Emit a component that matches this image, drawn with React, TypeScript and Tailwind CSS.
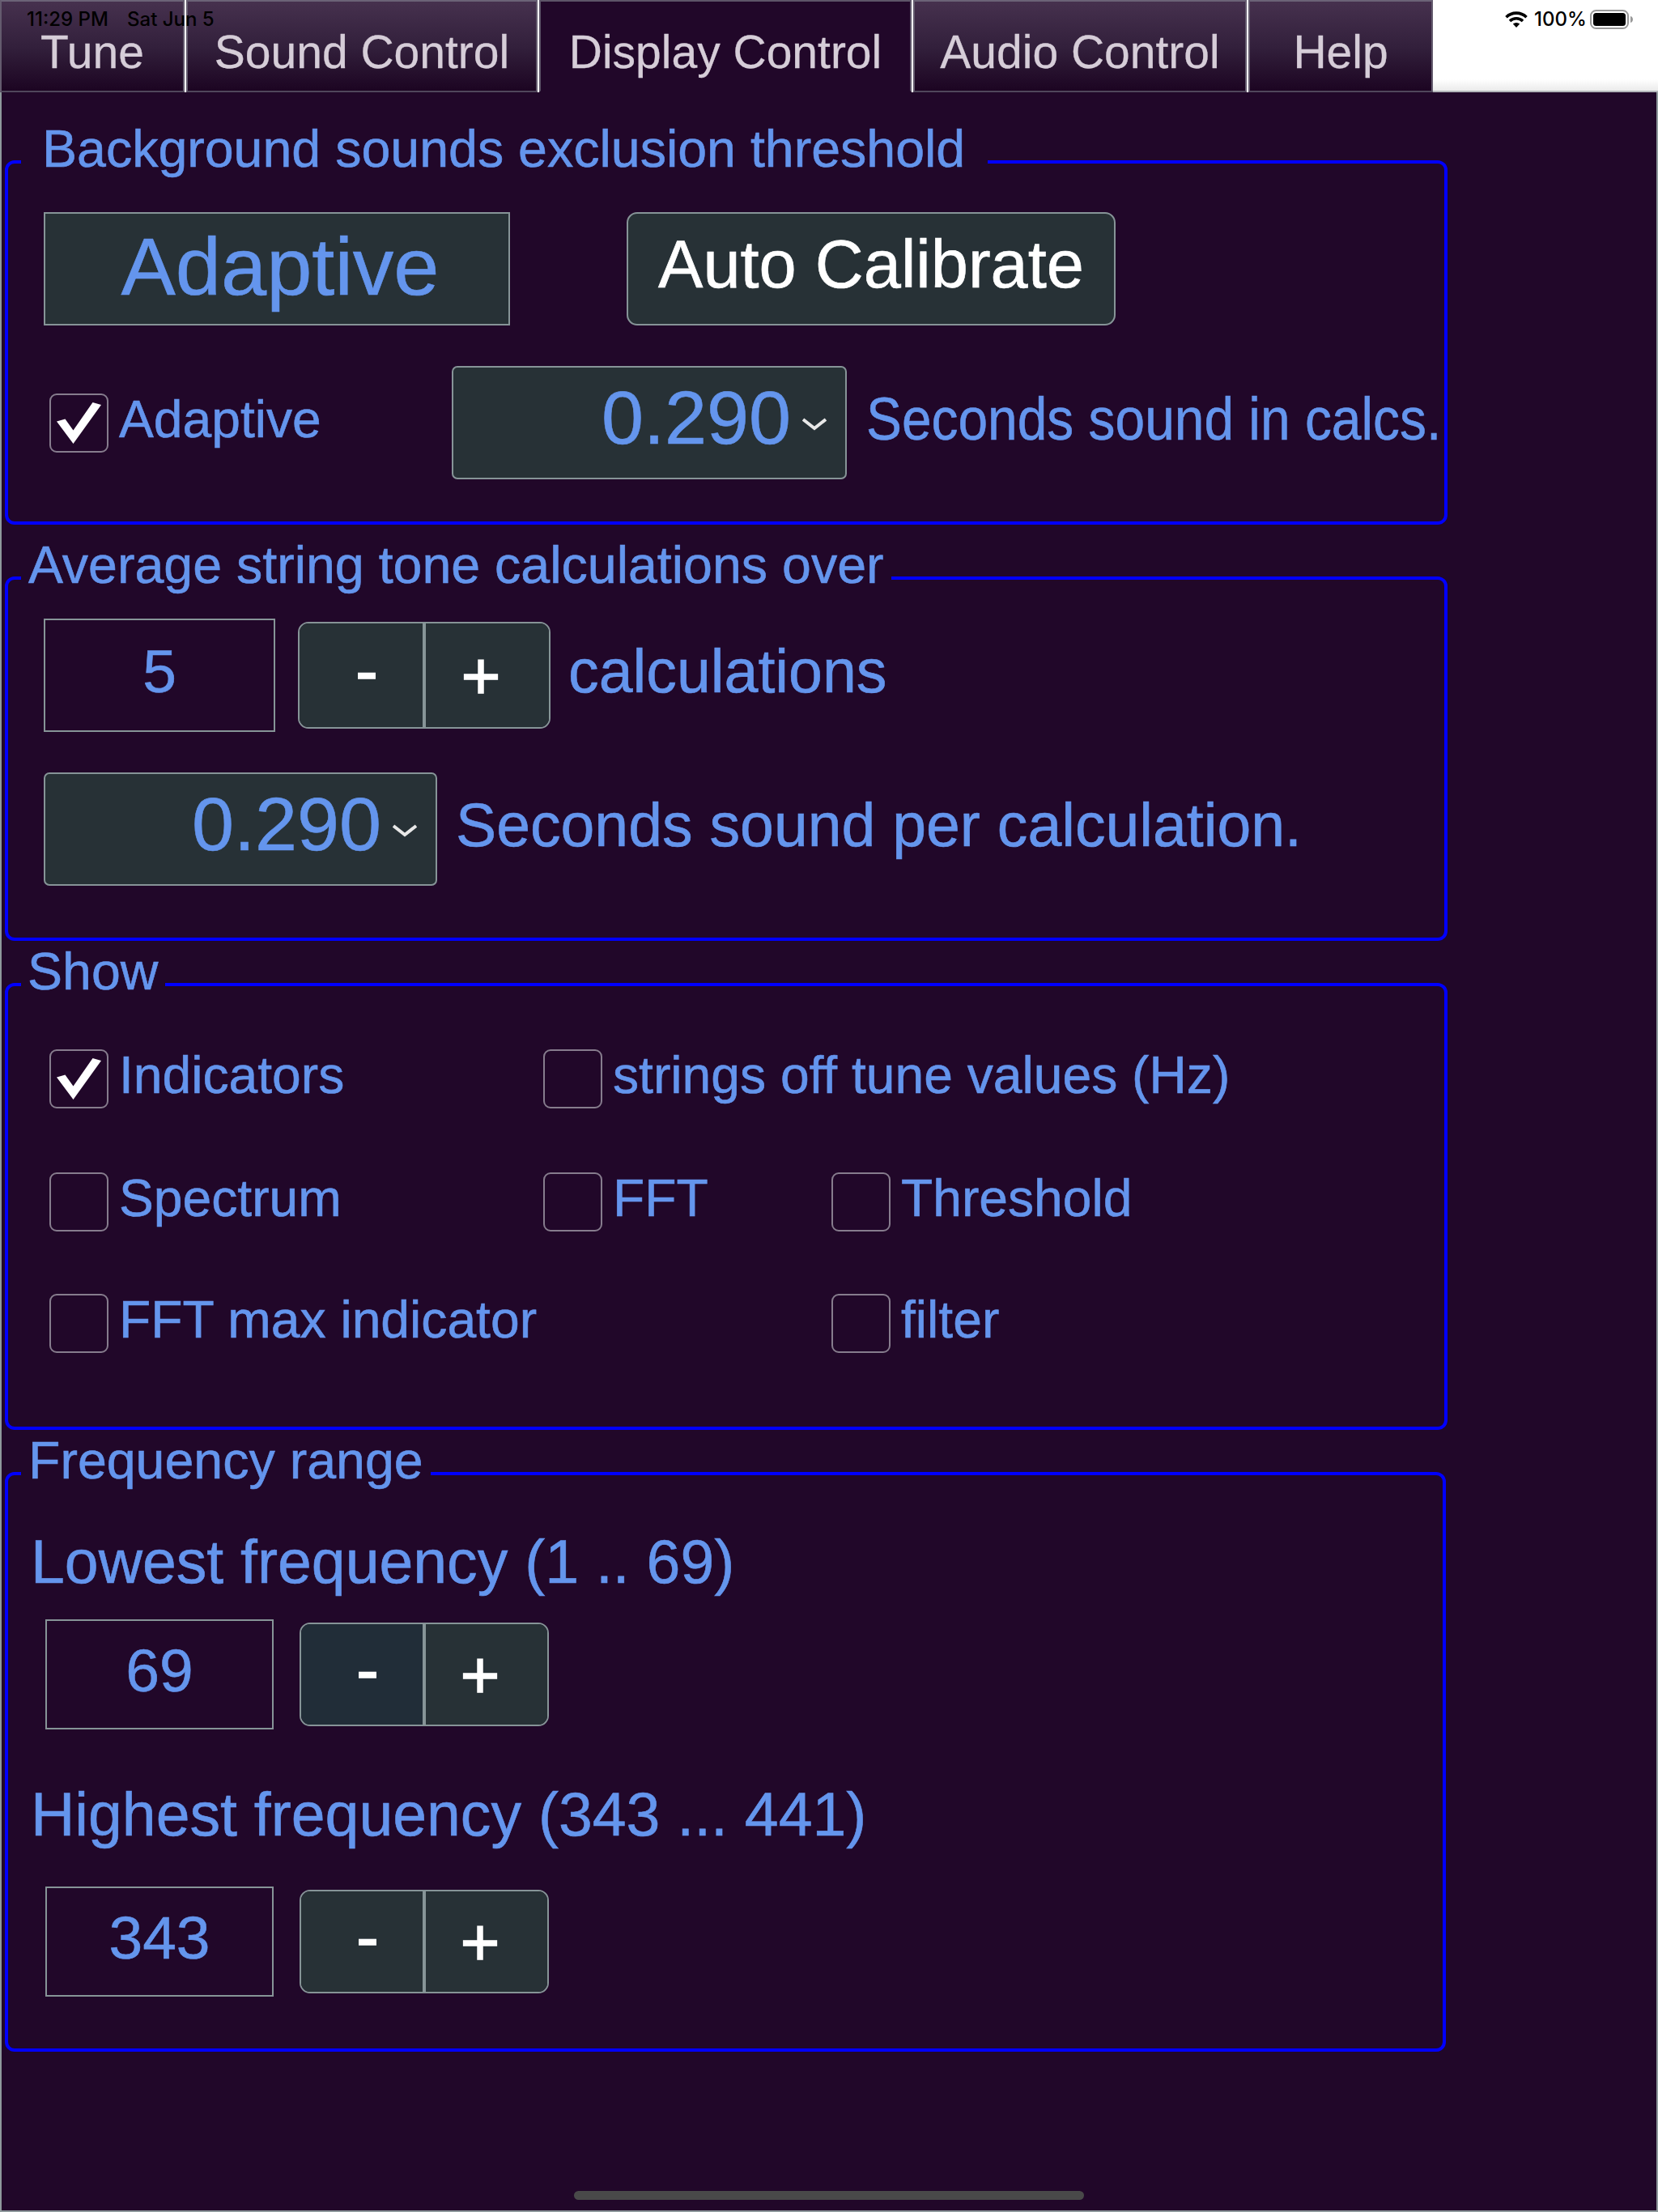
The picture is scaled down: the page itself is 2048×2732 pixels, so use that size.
import React from "react";

type Kids = { children?: React.ReactNode };

function Tab({ label, width, active }: { label: string; width: string; active?: boolean }) {
  return (
    <div
      className={`${width} h-[114px] shrink-0 border-2 pt-[36px] text-center text-[57px] leading-[52px] whitespace-nowrap text-[#d6cdd8] ${
        active
          ? "border-x-[#5d5468] border-t-[#5d5468] border-b-[#210729] bg-[#210729]"
          : "border-x-[#645b6e] border-t-[#6b6377] border-b-[#50465b] bg-linear-to-b from-[#46314e] via-[#33203c] to-[#1c0522]"
      }`}
    >
      {label}
    </div>
  );
}

function Group({ legend, legendClass, className, children }: Kids & { legend: string; legendClass: string; className: string }) {
  return (
    <section className={`${className} ml-[6px] flex flex-col rounded-[12px] border-4 border-[#0000ff]`}>
      <h2 className={`${legendClass} -mt-[52px] ml-[16px] h-[68px] shrink-0 self-start bg-[#210729] text-[64.5px] leading-[68px] whitespace-nowrap`}>{legend}</h2>
      {children}
    </section>
  );
}

function Check({ label, checked, className = "" }: { label: string; checked?: boolean; className?: string }) {
  return (
    <label className={`${className} flex h-[73px] items-center gap-[13px]`}>
      <span className="h-[73px] w-[73px] shrink-0 rounded-[9px] border-2 border-[#867c8d]">
        {checked && (
          <svg viewBox="2 2 69 69" className="h-full w-full">
            <path d="M9 34.5 19.5 31.5 29.5 45.5 53.5 11 64 14 29.5 62Z" fill="#fff" />
          </svg>
        )}
      </span>
      <span className="pb-[9px] text-[64.2px] leading-[64px] whitespace-nowrap">{label}</span>
    </label>
  );
}

function Select({ value, className }: { value: string; className: string }) {
  return (
    <div className={`${className} flex h-[140px] shrink-0 items-center justify-end rounded-[7px] border-2 border-[#869497] bg-[#273136] pr-[23px]`}>
      <span className="pb-[12px] text-[93.5px] leading-[94px]">{value}</span>
      <svg viewBox="0 0 30 16" className="mt-[3px] ml-[14px] h-[16px] w-[30px]">
        <path d="M1 2 15 13 29 2" fill="none" stroke="#e8e8e8" strokeWidth="4" />
      </svg>
    </div>
  );
}

function Stepper({ size, pressed }: { size: string; pressed?: boolean }) {
  return (
    <div className={`${size} grid shrink-0 grid-cols-[1fr_4px_1fr] overflow-hidden rounded-[13px] border-2 border-[#869497] text-[84px] leading-[84px] text-white [-webkit-text-stroke:1.4px]`}>
      <button className={`flex items-center justify-center pb-[12px] pl-[14px] ${pressed ? "bg-[#212d38]" : "bg-[#273136]"}`}>-</button>
      <span className="bg-[#869497]" />
      <button className="flex items-center justify-center bg-[#273136] pr-[16px]">+</button>
    </div>
  );
}

function NumberBox({ value, size }: { value: string; size: string }) {
  return (
    <div className={`${size} flex shrink-0 items-center justify-center border-2 border-[#869497] pb-[10px] text-[75px] leading-[75px]`}>
      {value}
    </div>
  );
}

function StatusBar() {
  return (
    <div className="absolute inset-x-0 top-0 flex h-[48px] items-center pr-[30px] pl-[33px] font-['Inter',sans-serif] text-[24px] leading-[24px] font-medium text-black">
      <span className="w-[124px] whitespace-nowrap">11:29 PM</span>
      <span className="grow whitespace-nowrap">Sat Jun 5</span>
      <svg viewBox="0 0 28 20" className="h-[20px] w-[28px]">
        <g fill="none" stroke="#000" strokeWidth="3.6">
          <path d="M1.5 7.2a18 18 0 0 1 25 0" />
          <path d="M6 12a11.6 11.6 0 0 1 16 0" />
        </g>
        <path d="M14 20 9.8 15.6a6.2 6.2 0 0 1 8.4 0Z" fill="#000" />
      </svg>
      <span className="ml-[8px] w-[69px] whitespace-nowrap">100%</span>
      <svg viewBox="0 0 54 24" className="h-[24px] w-[54px]">
        <rect x="1" y="1" width="46" height="22" rx="6.5" fill="none" stroke="#999" strokeWidth="2" />
        <rect x="4" y="4" width="40" height="16" rx="3.5" fill="#000" />
        <path d="M50 8c4 1 4 7 0 8Z" fill="#999" />
      </svg>
    </div>
  );
}

export default function App() {
  return (
    <div className="relative flex h-[2732px] w-[2048px] flex-col overflow-hidden bg-[#210729] font-['Liberation_Sans',Arial,sans-serif] text-[#6495ed]">
      <nav className="flex h-[114px] shrink-0 gap-[2px] bg-white [-webkit-text-stroke:0.3px]">
        <Tab label="Tune" width="w-[228px]" />
        <Tab label="Sound Control" width="w-[434px]" />
        <Tab label="Display Control" width="w-[460px]" active />
        <Tab label="Audio Control" width="w-[412px]" />
        <Tab label="Help" width="w-[228px]" />
        <div className="-ml-[2px] flex grow flex-col justify-end">
          <div className="h-[16px] border-b-2 border-[#b3b5ba] bg-linear-to-b from-white to-[#ebebeb]" />
        </div>
      </nav>

      <main className="flex grow flex-col border-x-2 border-b-2 border-[#8f999c] [-webkit-text-stroke:0.6px]">
        <div className="-ml-[2px] flex flex-col">
          <Group legend="Background sounds exclusion threshold" className="mt-[84px] h-[450px] w-[1782px]" legendClass="w-[1194px] pl-[26px]">
            <div className="mt-[44px] ml-[44px] flex">
              <div className="flex h-[140px] w-[576px] items-center justify-center border-2 border-[#869497] bg-[#273136] pb-[6px] pl-[8px] text-[101px] leading-[100px]">
                Adaptive
              </div>
              <button className="ml-[144px] flex h-[140px] w-[604px] items-center justify-center rounded-[13px] border-2 border-[#869497] bg-[#273136] pb-[10px] text-[83px] leading-[84px] text-white">
                Auto Calibrate
              </button>
            </div>
            <div className="mt-[50px] ml-[51px] flex h-[140px] items-center">
              <Check label="Adaptive" checked className="w-[497px]" />
              <Select value="0.290" className="w-[488px]" />
              <span className="ml-[24px] w-[690px] origin-left scale-x-[.89] pb-[9px] text-[74px] leading-[74px] whitespace-nowrap">Seconds sound in calcs.</span>
            </div>
          </Group>

          <Group legend="Average string tone calculations over" className="mt-[64px] h-[450px] w-[1782px]" legendClass="w-[1075px] pl-[9px]">
            <div className="mt-[32px] ml-[44px] flex h-[140px] items-center">
              <NumberBox value="5" size="h-[140px] w-[286px]" />
              <div className="ml-[28px]">
                <Stepper size="h-[132px] w-[312px]" />
              </div>
              <span className="ml-[22px] pb-[10px] text-[75.3px] leading-[76px]">calculations</span>
            </div>
            <div className="mt-[50px] ml-[44px] flex h-[140px] items-center">
              <Select value="0.290" className="w-[486px]" />
              <span className="ml-[23px] pb-[10px] text-[75.2px] leading-[76px] whitespace-nowrap">Seconds sound per calculation.</span>
            </div>
          </Group>

          <Group legend="Show" className="mt-[52px] h-[552px] w-[1782px]" legendClass="w-[178px] pl-[8px]">
            <div className="mt-[62px] ml-[51px] flex">
              <Check label="Indicators" checked className="w-[610px]" />
              <Check label="strings off tune values (Hz)" />
            </div>
            <div className="mt-[79px] ml-[51px] flex">
              <Check label="Spectrum" className="w-[610px]" />
              <Check label="FFT" className="w-[356px]" />
              <Check label="Threshold" />
            </div>
            <div className="mt-[77px] ml-[51px] flex">
              <Check label="FFT max indicator" className="w-[966px]" />
              <Check label="filter" />
            </div>
          </Group>

          <Group legend="Frequency range" className="mt-[52px] h-[716px] w-[1780px]" legendClass="w-[506px] pl-[9px]">
            <p className="mt-[51px] ml-[28px] h-[80px] text-[75.2px] leading-[80px] whitespace-nowrap">Lowest frequency (1 .. 69)</p>
            <div className="mt-[31px] ml-[46px] flex h-[136px] items-center gap-[32px]">
              <NumberBox value="69" size="h-[136px] w-[282px]" />
              <Stepper size="h-[128px] w-[308px]" pressed />
            </div>
            <p className="mt-[65px] ml-[28px] h-[80px] text-[75.2px] leading-[80px] whitespace-nowrap">Highest frequency (343 ... 441)</p>
            <div className="mt-[49px] ml-[46px] flex h-[136px] items-center gap-[32px]">
              <NumberBox value="343" size="h-[136px] w-[282px]" />
              <Stepper size="h-[128px] w-[308px]" />
            </div>
          </Group>
        </div>
      </main>

      <StatusBar />
      <div className="absolute top-[2706px] left-[709px] h-[11px] w-[630px] rounded-full bg-[#494949]" />
    </div>
  );
}
